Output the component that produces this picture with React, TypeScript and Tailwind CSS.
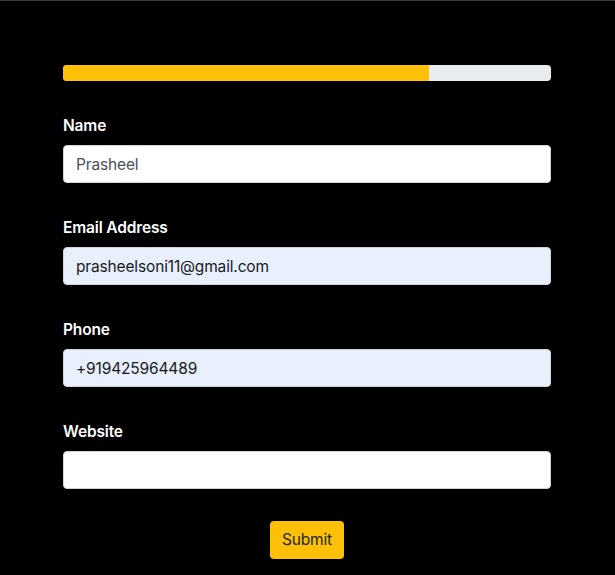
import React from 'react';

const fields = [
  { label: 'Name', value: 'Prasheel', autofilled: false },
  { label: 'Email Address', value: 'prasheelsoni11@gmail.com', autofilled: true },
  { label: 'Phone', value: '+919425964489', autofilled: true },
  { label: 'Website', value: '', autofilled: false },
];

export default function App() {
  return (
    <div
      className="min-h-[575px] w-full border-t border-[#3c3c3c] bg-black px-[63px]"
      style={{ fontFamily: 'Inter, "Noto Sans", sans-serif' }}
    >
      <div className="w-[488px] pt-16">
        <div className="flex h-4 w-full overflow-hidden rounded bg-[#e9ecef]">
          <div className="h-full w-3/4 bg-[#ffc107]"></div>
        </div>
        <form className="mt-8 flex flex-col gap-8" onSubmit={(e) => e.preventDefault()}>
          {fields.map((field) => (
            <div key={field.label} className="flex flex-col">
              <label className="mb-2 pt-px text-[15.5px] leading-6 font-semibold tracking-[-0.01em] text-white">
                {field.label}
              </label>
              <input
                type="text"
                defaultValue={field.value}
                className={`-mt-px h-[38px] w-full rounded border border-[#ced4da] px-3 text-[15.5px] tracking-[-0.01em] outline-none ${
                  field.autofilled ? 'bg-[#e8f0fe] text-[#1a1a1a]' : 'bg-white text-[#495057]'
                }`}
              />
            </div>
          ))}
          <div className="flex justify-center">
            <button
              type="submit"
              className="h-[38px] rounded bg-[#ffc107] px-3 text-[15.5px] tracking-[-0.01em] text-[#212529]"
            >
              Submit
            </button>
          </div>
        </form>
      </div>
    </div>
  );
}
